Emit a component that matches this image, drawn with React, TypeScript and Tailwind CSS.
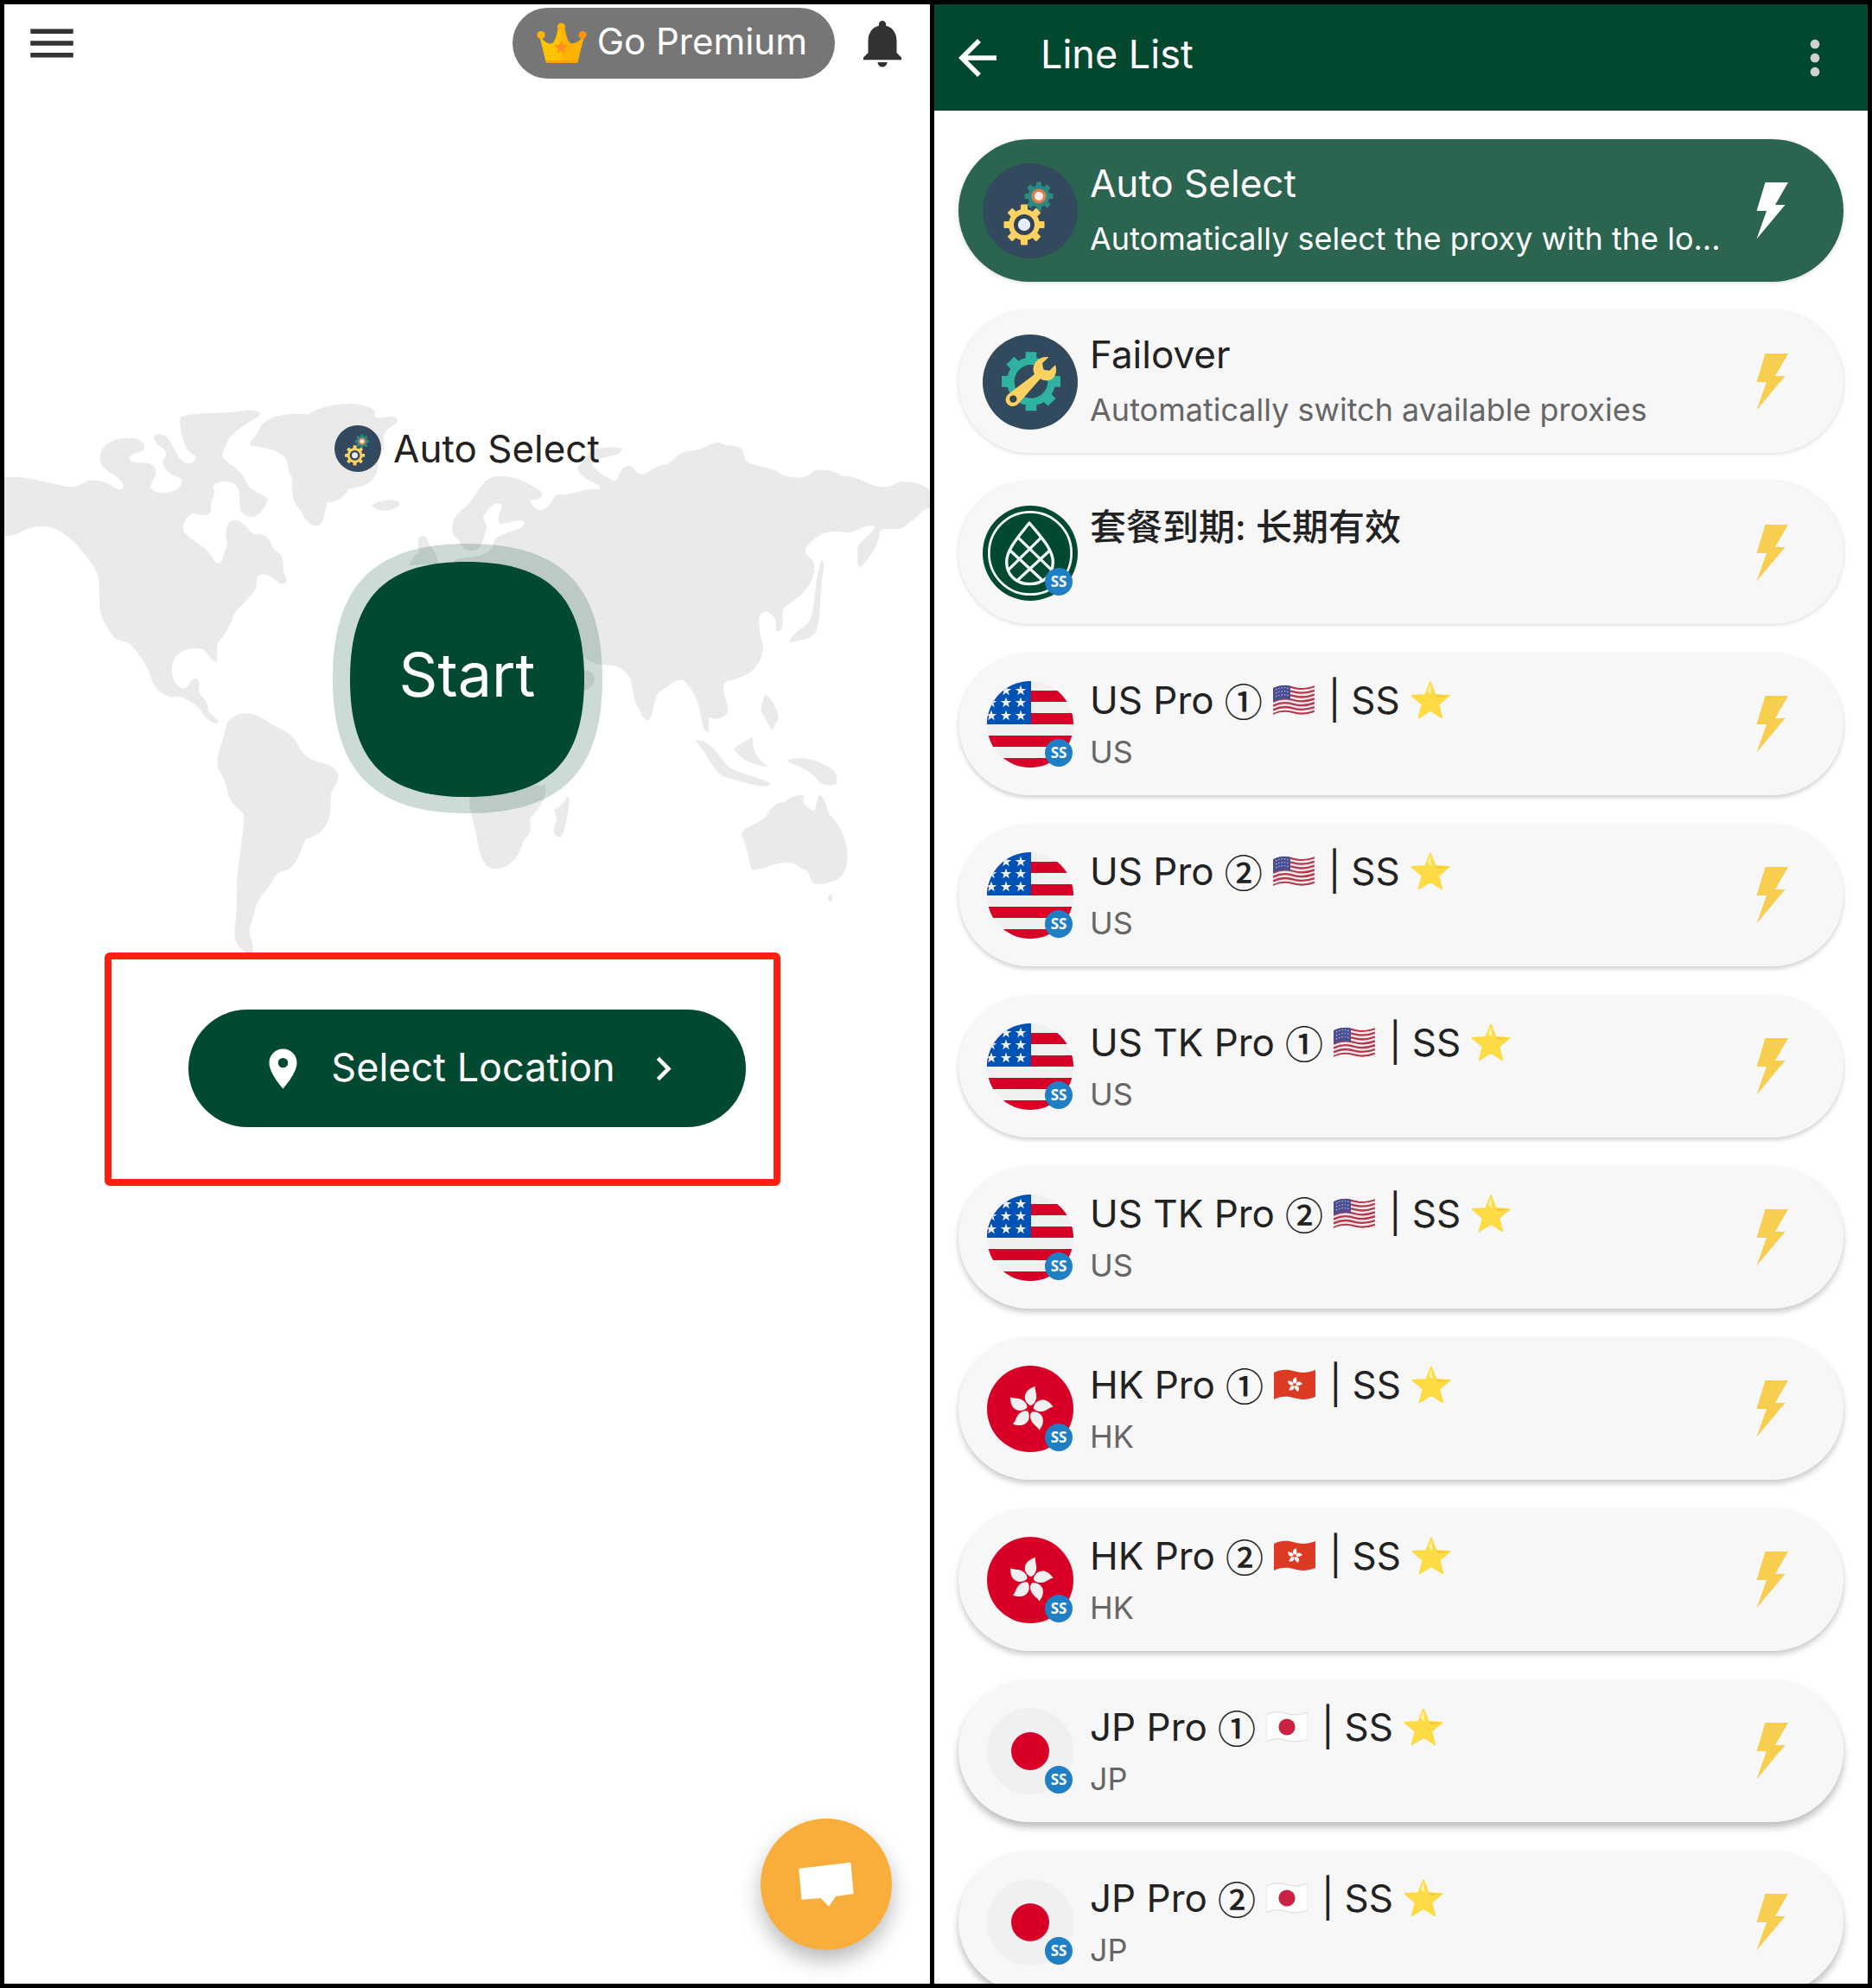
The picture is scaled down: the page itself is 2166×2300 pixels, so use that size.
import type { ReactNode } from "react";
import {
  MdArrowBack,
  MdChevronRight,
  MdMenu,
  MdMoreVert,
  MdNotifications,
  MdPlace,
} from "react-icons/md";

function starPoints(cx: number, cy: number, outer: number, inner: number) {
  return Array.from({ length: 10 }, (_, i) => {
    const r = i % 2 === 0 ? outer : inner;
    const a = (Math.PI / 5) * i - Math.PI / 2;
    return `${(cx + r * Math.cos(a)).toFixed(2)},${(cy + r * Math.sin(a)).toFixed(2)}`;
  }).join(" ");
}

function GearShape({ cx, cy, r, tooth, width, fill }: { cx: number; cy: number; r: number; tooth: number; width: number; fill: string }) {
  return (
    <g fill={fill}>
      <circle cx={cx} cy={cy} r={r} />
      {[0, 45, 90, 135, 180, 225, 270, 315].map((a) => (
        <rect key={a} x={cx - width / 2} y={cy - tooth} width={width} height={tooth} rx={1} transform={`rotate(${a} ${cx} ${cy})`} />
      ))}
    </g>
  );
}

function GearsIcon({ className }: { className: string }) {
  return (
    <svg viewBox="0 0 110 110" className={className} aria-hidden="true">
      <circle cx="55" cy="55" r="55" fill="#334a5e" />
      <GearShape cx={65} cy={38} r={12.5} tooth={16.5} width={6} fill="#2c8a80" />
      <circle cx="65" cy="38" r="8.5" fill="#d9814f" />
      <circle cx="65" cy="38" r="5" fill="#f6f1ee" />
      <GearShape cx={48} cy={71} r={18} tooth={23.5} width={8} fill="#fdd062" />
      <circle cx="48" cy="71" r="12" fill="#2f4355" />
      <circle cx="48" cy="71" r="7.2" fill="#e4ecfb" />
    </svg>
  );
}

function WrenchIcon({ className }: { className: string }) {
  return (
    <svg viewBox="0 0 330 330" className={className} aria-hidden="true">
      <circle cx="165" cy="165" r="165" fill="#324a5e" />
      <GearShape cx={168} cy={163} r={84} tooth={102} width={38} fill="#2fb3a0" />
      <circle cx="168" cy="163" r="58" fill="#324a5e" />
      <circle cx="236" cy="96" r="34" fill="#324a5e" />
      <path
        d="M176 128 C172 96 200 74 229 79 L207 100 L211 122 L232 125 L252 106 C262 132 248 161 222 160 C212 160 206 157 200 154 L126 238 C112 258 80 250 80 226 C80 216 86 210 92 205 L180 138 Z"
        fill="#fdd062"
      />
      <circle cx="106" cy="224" r="10" fill="#324a5e" stroke="#3b3a3c" strokeWidth="5" />
    </svg>
  );
}

function PineconeIcon({ className }: { className: string }) {
  return (
    <svg viewBox="0 0 330 330" className={className} fill="none" stroke="#f4fffa" aria-hidden="true">
      <circle cx="165" cy="165" r="165" fill="#014930" stroke="none" />
      <circle cx="165" cy="165" r="143" strokeWidth="8" />
      <path d="M162 60 C124 108 83 152 83 196 C83 242 118 272 163 272 C210 272 244 242 244 196 C244 152 202 108 162 60 Z" strokeWidth="10" strokeLinejoin="round" />
      <path d="M122 110 L242 226 M93 154 L210 262 M204 110 L86 226 M235 154 L118 262" strokeWidth="10" />
    </svg>
  );
}

function UsRound({ className }: { className: string }) {
  const stars = [[39, 11], [22, 11], [39, 25], [22, 25], [5, 25], [39, 40], [22, 40], [5, 40]];
  return (
    <svg viewBox="0 0 100 100" className={className} aria-hidden="true">
      <clipPath id="us-round">
        <circle cx="50" cy="50" r="50" />
      </clipPath>
      <g clipPath="url(#us-round)">
        <rect width="100" height="100" fill="#f0f0f0" />
        {[11, 37, 63, 89].map((y) => (
          <rect key={y} y={y} width="100" height="13" fill="#d80027" />
        ))}
        <rect width="51" height="50" fill="#0052b4" />
        {stars.map(([x, y]) => (
          <polygon key={`${x}-${y}`} points={starPoints(x, y, 6.6, 2.6)} fill="#f0f0f0" />
        ))}
      </g>
    </svg>
  );
}

function Petals() {
  return (
    <>
      {[0, 72, 144, 216, 288].map((a) => (
        <path key={a} d="M50 46 C41 41 41 28 56 24 C55 28 58 33 57 38 C56 43 53 46 50 46 Z" transform={`rotate(${a} 50 50)`} />
      ))}
    </>
  );
}

function HkRound({ className }: { className: string }) {
  return (
    <svg viewBox="0 0 100 100" className={className} aria-hidden="true">
      <circle cx="50" cy="50" r="50" fill="#d80027" />
      <g fill="#f0f0f0">
        <Petals />
      </g>
    </svg>
  );
}

function JpRound({ className }: { className: string }) {
  return (
    <svg viewBox="0 0 100 100" className={className} aria-hidden="true">
      <circle cx="50" cy="50" r="50" fill="#f0f0f0" />
      <circle cx="50" cy="50" r="22" fill="#d80027" />
    </svg>
  );
}

const WAVE = "M0 4 C8 0 16 0 24 2.5 C32 5 40 4 48 1 V32 C40 35 32 36 24 33.5 C16 31 8 31 0 35 Z";

function WavingFlag({ country }: { country: string }) {
  return (
    <svg viewBox="0 0 48 36" className="h-9 w-12 shrink-0" role="img" aria-label={`${country} flag`}>
      {country === "US" && (
        <>
          <clipPath id="us-wave">
            <path d={WAVE} />
          </clipPath>
          <g clipPath="url(#us-wave)">
            <path d={WAVE} fill="#eceaec" />
            {[0, 1, 2, 3, 4, 5, 6].map((i) => (
              <path key={i} d="M0 5.4 C9 1 16 1 24 3.6 C32 6 40 5 48 2" transform={`translate(0 ${i * 4.8})`} stroke="#b9364a" strokeWidth="2.3" fill="none" />
            ))}
            <path d="M0 4 C8 0 14 0 20 1.4 V17.5 C14 16 8 16 0 20 Z" fill="#4a4f94" />
            <path d="M3 6 C9 3 14 3 19 5 M3 10 C9 7 14 7 19 9 M3 14 C9 11 14 11 19 13" stroke="#b9bbdc" strokeWidth="1.2" strokeDasharray="1.4 2" fill="none" />
          </g>
        </>
      )}
      {country === "HK" && (
        <>
          <path d={WAVE} fill="#dd3a24" />
          <g fill="#fff" transform="translate(7 1) scale(0.34)">
            <Petals />
          </g>
        </>
      )}
      {country === "JP" && (
        <>
          <path d={WAVE} fill="#fdfdfd" stroke="#dcdcdc" strokeWidth="1" />
          <circle cx="24" cy="18" r="9.6" fill="#c92242" />
        </>
      )}
    </svg>
  );
}

function StarIcon() {
  return (
    <svg viewBox="0 0 46 46" className="size-[46px] shrink-0" role="img" aria-label="star">
      <polygon points={starPoints(23, 25, 22.5, 9.8)} fill="#fddb45" stroke="#fddb45" strokeWidth="2" strokeLinejoin="round" />
      <path d="M23 4 L24.5 17 L20 13 Z" fill="#fff3a8" />
      <path d="M44 18.5 L31 20 L29 17 Z" fill="#f6c437" />
    </svg>
  );
}

function CrownIcon() {
  return (
    <svg viewBox="0 0 58 48" className="h-12 w-[58px] shrink-0" aria-hidden="true">
      <path d="M3 15 L11 47 H47 L55 15 C50 22 43 26 39 24 C35 21 34 14 32 6 H25 C23 14 22 21 18 24 C14 26 8 22 3 15 Z" fill="#ffc400" />
      <path d="M28.500 6 H32 C34 14 35 21 39 24 C43 26 50 22 55 15 L47 47 H28.500 Z" fill="#ffb300" />
      <path d="M11 44 H47 V47 H11 Z" fill="#ff9d12" />
      <circle cx="28.500" cy="5" r="4.600" fill="#ffb300" />
      <circle cx="5" cy="14.500" r="4.600" fill="#ffb300" />
      <circle cx="53" cy="14.500" r="4.600" fill="#ff9212" />
      <polygon points={starPoints(28.5, 29, 8.5, 3.8)} fill="#ff8f1c" />
    </svg>
  );
}

function BoltIcon({ className }: { className: string }) {
  return (
    <svg viewBox="0 0 37 66" className={className} fill="currentColor" aria-hidden="true">
      <path d="M10.500 0 H37 L22 26 H33.500 L0.500 65.500 L12 33 H0.500 Z" />
    </svg>
  );
}

function WorldMap() {
  return (
    <svg viewBox="5 450 1071 660" className="absolute inset-x-0 top-0 w-full" fill="#eaeaea" aria-hidden="true">
      <g transform="translate(0 450) scale(0.35714 0.42092)">
        <path d="M0 245 C70 235 110 250 160 258 C210 268 235 275 262 262 C300 240 340 255 370 270 C390 280 400 278 400 262 C385 235 320 225 324 190 C325 150 370 135 420 135 C455 135 475 150 467 168 C440 178 415 180 420 192 C435 215 480 190 500 215 C515 240 490 250 487 270 C500 290 550 290 575 275 C600 255 590 245 570 240 C545 235 525 210 527 195 C545 185 540 170 520 158 C495 145 490 125 515 125 C545 125 555 150 570 175 C590 205 620 215 635 190 C630 175 610 180 600 155 C585 120 580 90 585 77 C640 62 740 70 800 58 C850 58 855 70 820 85 C780 105 740 130 735 150 C730 165 710 180 725 192 C750 210 780 225 795 250 C810 285 850 285 870 302 C860 325 840 352 815 352 C790 350 775 335 777 325 C775 305 780 280 765 265 C745 250 700 250 690 270 C705 290 680 305 683 325 C690 350 665 350 630 342 C600 345 590 375 595 390 C620 420 660 425 690 465 C700 485 718 480 720 470 C722 450 740 435 735 420 C725 380 740 358 765 360 C800 370 810 400 830 400 C880 395 870 430 895 445 C920 460 918 480 918 505 C940 530 920 542 905 533 C880 515 850 500 835 515 C825 530 840 540 820 560 C790 590 760 610 753 630 C740 670 705 690 703 705 L703 750 C685 750 680 730 655 715 C600 705 555 730 556 775 C558 810 590 830 605 820 C615 810 620 795 635 796 C655 805 640 825 645 835 C660 850 675 860 675 885 C690 900 708 908 708 915 C700 930 670 910 655 890 C640 865 600 850 580 845 C550 855 500 830 490 795 C480 760 430 705 415 697 C385 690 375 690 365 678 C335 640 322 620 322 580 C322 540 322 520 312 500 C270 440 220 400 180 385 C130 370 100 380 70 392 C50 405 20 405 0 402 Z" />
        <path d="M735 920 C760 885 820 885 860 910 C890 930 940 940 960 970 C985 1020 1020 1020 1070 1035 C1100 1050 1105 1065 1085 1090 C1060 1120 1080 1150 1065 1180 C1050 1220 1020 1230 990 1237 C975 1260 970 1300 935 1320 C900 1335 905 1320 885 1350 C860 1385 830 1400 825 1440 C805 1490 805 1490 815 1515 C822 1535 820 1550 815 1560 L790 1545 C760 1525 760 1510 760 1480 C770 1430 765 1400 768 1350 C775 1280 790 1220 790 1170 C775 1150 745 1140 737 1110 C730 1070 715 1060 705 1040 C700 1000 720 980 735 920 Z" />
        <path d="M845 100 C880 70 940 65 1000 70 C1040 45 1100 42 1140 40 C1180 45 1210 50 1217 65 C1205 85 1230 80 1270 75 C1300 82 1290 95 1265 105 C1240 120 1240 135 1245 165 C1220 180 1230 220 1215 240 C1190 270 1160 270 1130 275 C1110 300 1090 312 1062 312 C1050 330 1055 370 1030 375 C990 380 985 340 960 320 C940 290 950 270 947 245 C930 225 935 210 925 190 C900 165 850 160 810 155 C805 145 840 125 845 100 Z" />
        <path d="M1202 320 C1230 305 1290 298 1295 315 C1290 335 1240 337 1225 332 Z" />
        <path d="M1355 410 C1370 398 1385 405 1388 425 C1410 445 1420 465 1420 480 L1325 485 C1335 465 1350 450 1355 455 Z" />
      </g>
      <g transform="translate(540 450) scale(0.35714 0.42092)">
        <path d="M-47 380 C-45 340 0 330 20 300 C50 265 60 240 110 240 C160 240 190 255 240 280 C250 295 240 305 205 305 C215 335 250 340 265 320 C280 310 285 290 295 290 C340 295 360 275 430 275 C440 262 410 260 385 245 C350 225 355 215 370 205 C400 190 385 180 400 170 C430 160 490 155 505 165 C500 190 430 180 405 205 C420 230 450 240 480 253 C500 240 490 215 525 210 C550 215 545 235 570 235 C600 225 610 210 650 207 C680 190 690 170 730 170 C780 165 790 145 820 147 C840 160 870 150 890 165 C905 185 895 200 920 205 C970 220 990 215 1020 235 C1060 248 1100 248 1125 225 C1160 218 1190 225 1220 240 C1270 240 1290 260 1330 268 C1360 270 1375 270 1395 257 C1430 250 1480 260 1502 280 L1502 328 C1470 330 1465 350 1455 355 C1430 365 1420 385 1395 385 C1370 385 1345 382 1337 395 C1335 430 1310 460 1275 492 C1262 490 1268 460 1266 435 C1280 415 1310 400 1325 378 C1290 370 1270 390 1240 395 C1190 390 1160 388 1130 410 C1110 425 1090 440 1100 455 C1120 470 1130 475 1125 500 C1120 550 1070 575 1030 600 C1015 620 1030 640 1020 660 C1005 675 1000 665 1002 645 C1000 620 975 612 965 612 C945 620 943 635 950 655 C945 680 965 695 960 720 C945 780 900 790 840 805 C820 820 840 850 848 880 C845 900 810 915 787 903 C780 910 785 930 785 943 C765 945 765 920 758 900 C755 860 730 820 700 800 C680 795 650 820 620 835 C605 855 605 900 590 910 C575 915 565 890 555 875 C540 855 540 830 530 795 C500 755 470 760 434 757 C410 757 395 745 380 738 L-40 740 V470 C20 455 60 470 85 430 C90 405 110 405 130 395 C160 390 190 380 187 365 C165 355 140 370 105 370 C95 350 115 330 115 320 C100 305 75 320 55 350 C50 365 75 370 60 395 C50 420 50 440 20 445 C-10 445 -20 430 -25 415 C-40 405 -47 400 -47 380 Z" />
        <path d="M370 772 C400 772 415 785 415 797 C412 815 395 828 370 832 Z" />
        <path d="M10 1120 C5 1150 20 1180 30 1220 C40 1270 50 1310 80 1318 C130 1325 170 1290 185 1240 C215 1215 205 1200 205 1185 C220 1160 260 1140 255 1090 L10 1090 Z" />
        <path d="M325 1120 C340 1120 330 1150 325 1180 C315 1210 315 1232 300 1232 C280 1225 275 1215 290 1190 C295 1170 280 1165 285 1155 C310 1145 315 1135 325 1120 Z" />
        <path d="M1150 470 C1160 480 1158 490 1150 530 C1145 580 1145 650 1130 670 C1110 690 1080 690 1050 697 C1040 690 1060 675 1080 660 C1110 650 1125 620 1128 560 C1135 530 1135 500 1150 470 Z" />
        <path d="M968 840 C990 850 1012 890 1010 905 L992 937 C975 925 965 900 953 885 C955 865 960 855 968 840 Z" />
        <path d="M740 967 C780 960 800 990 850 1040 C890 1060 960 1070 985 1085 C970 1100 930 1090 830 1065 C790 1040 780 1000 740 967 Z" />
        <path d="M925 957 C930 970 925 985 935 1000 C945 1020 970 1030 975 1038 C930 1035 890 1020 865 990 C885 975 910 965 925 957 Z" />
        <path d="M1040 1020 C1080 1010 1120 1015 1150 1030 C1190 1045 1200 1050 1200 1085 C1180 1092 1150 1090 1140 1080 C1120 1050 1080 1040 1040 1025 Z" />
        <path d="M890 1225 C900 1200 940 1200 970 1175 C985 1150 1005 1135 1030 1135 C1050 1120 1080 1112 1095 1120 C1080 1135 1100 1150 1125 1160 C1135 1150 1130 1125 1145 1115 C1160 1125 1165 1150 1175 1170 C1215 1200 1240 1260 1233 1300 C1225 1345 1190 1362 1125 1360 C1110 1345 1110 1325 1095 1320 C1075 1320 1070 1300 1040 1303 C1000 1300 970 1320 925 1322 C915 1310 915 1270 890 1225 Z" />
        <ellipse cx="1178" cy="1400" rx="7" ry="10" />
      </g>
    </svg>
  );
}

function HomeScreen() {
  return (
    <section className="relative flex min-w-0 flex-col overflow-hidden bg-white">
      <header className="flex h-[90px] shrink-0 items-center px-[22px]">
        <button type="button" aria-label="Menu" className="text-[#333]">
          <MdMenu className="size-[66px]" />
        </button>
        <button type="button" className="ml-auto flex h-[82px] items-center gap-3 rounded-full bg-[#767676] pr-8 pl-7 text-[42px] leading-none whitespace-nowrap text-white">
          <CrownIcon />
          <span className="pb-1">Go Premium</span>
        </button>
        <button type="button" aria-label="Notifications" className="ml-[22px] text-[#333]">
          <MdNotifications className="size-[66px]" />
        </button>
      </header>

      <div className="relative mt-[355px] flex flex-col items-center pt-[42px]">
        <WorldMap />
        <div className="relative flex h-[54px] items-center gap-[14px] text-[44px] leading-none text-[#222]">
          <GearsIcon className="size-[54px]" />
          <span>Auto Select</span>
        </div>
        <button type="button" className="relative mt-[83px] grid size-[312px] place-items-center text-[70px] leading-none text-white">
          <svg viewBox="0 0 312 312" className="absolute inset-0 size-full" aria-hidden="true">
            <path d="M0 156 C0 48 48 0 156 0 C264 0 312 48 312 156 C312 264 264 312 156 312 C48 312 0 264 0 156 Z" fill="#014930" fillOpacity="0.2" />
            <path d="M20 157 C20 62 61 21 155 21 C250 21 291 62 291 157 C291 252 250 293 155 293 C61 293 20 252 20 157 Z" fill="#014930" />
          </svg>
          <span className="relative pb-2">Start</span>
        </button>
        <div className="relative mt-[227px]">
          <div className="pointer-events-none absolute -top-[66px] -right-10 -bottom-[68px] -left-[97px] rounded-md border-8 border-[#ff2011]" />
          <button type="button" className="flex h-[136px] items-center rounded-full bg-[#014930] pr-[68px] pl-[82px] text-[45px] leading-none whitespace-nowrap text-white">
            <MdPlace className="size-[55px]" />
            <span className="mr-[28px] ml-[28px] pb-1">Select Location</span>
            <MdChevronRight className="size-[55px]" />
          </button>
        </div>
      </div>

      <button
        type="button"
        aria-label="Chat"
        className="absolute right-11 bottom-[39px] size-[152px] rounded-full bg-[#f9ae3b] shadow-[0_12px_24px_rgba(0,0,0,0.28)]"
      >
        <svg viewBox="0 0 456 456" className="size-full" fill="#fff" aria-hidden="true">
          <path d="M133 173 L313 152 L323 261 L261 270 L237 305 L209 276 L142 281 Z" />
        </svg>
      </button>
    </section>
  );
}

type Line = {
  title: string;
  subtitle?: string;
  icon: ReactNode;
  country?: string;
  number?: string;
  badge?: boolean;
  shadow: string;
};

const round = "size-[100px]";
const SOFT = "shadow-[0_1px_5px_rgba(0,0,0,0.16)]";
const LOW = "shadow-[0_3px_5px_rgba(0,0,0,0.18)]";
const MID = "shadow-[0_4px_7px_rgba(0,0,0,0.22)]";
const HIGH = "shadow-[0_6px_9px_rgba(0,0,0,0.26)]";

const lines: Line[] = [
  { title: "Auto Select", subtitle: "Automatically select the proxy with the lo...", icon: <GearsIcon className="size-[110px]" />, shadow: SOFT },
  { title: "Failover", subtitle: "Automatically switch available proxies", icon: <WrenchIcon className="size-[110px]" />, shadow: SOFT },
  { title: "套餐到期: 长期有效", icon: <PineconeIcon className="size-[110px]" />, badge: true, shadow: SOFT },
  { title: "US Pro", number: "①", country: "US", icon: <UsRound className={round} />, badge: true, shadow: LOW },
  { title: "US Pro", number: "②", country: "US", icon: <UsRound className={round} />, badge: true, shadow: LOW },
  { title: "US TK Pro", number: "①", country: "US", icon: <UsRound className={round} />, badge: true, shadow: LOW },
  { title: "US TK Pro", number: "②", country: "US", icon: <UsRound className={round} />, badge: true, shadow: MID },
  { title: "HK Pro", number: "①", country: "HK", icon: <HkRound className={round} />, badge: true, shadow: MID },
  { title: "HK Pro", number: "②", country: "HK", icon: <HkRound className={round} />, badge: true, shadow: MID },
  { title: "JP Pro", number: "①", country: "JP", icon: <JpRound className={round} />, badge: true, shadow: HIGH },
  { title: "JP Pro", number: "②", country: "JP", icon: <JpRound className={round} />, badge: true, shadow: HIGH },
];

function LineCard({ line, selected }: { line: Line; selected: boolean }) {
  return (
    <button
      type="button"
      aria-pressed={selected}
      className={`flex h-[165px] w-full items-center rounded-full pr-16 pl-7 text-left ${line.shadow} ${selected ? "bg-[#2b644f] text-white" : "bg-[#f7f7f7] text-[#222]"}`}
    >
      <span className="relative grid size-[110px] shrink-0 place-items-center">
        {line.icon}
        {line.badge && (
          <span className="absolute top-[72px] left-[72px] grid size-8 place-items-center rounded-full bg-[#1f7fc4] font-['Open_Sans',sans-serif] text-[17px] leading-none font-bold text-white">
            SS
          </span>
        )}
      </span>
      <span className="ml-[14px] flex h-full min-w-0 flex-1 flex-col whitespace-nowrap">
        {line.country ? (
          <>
            <span className="mt-[29px] flex h-[52px] items-center gap-3 text-[44px] leading-[52px]">
              <span>{line.title}</span>
              <span className="font-['Noto_Sans_CJK_SC',sans-serif] leading-[52px] font-medium">{line.number}</span>
              <WavingFlag country={line.country} />
              <span className="ml-1">|</span>
              <span>SS</span>
              <StarIcon />
            </span>
            <span className="mt-3 text-[36px] leading-[44px] text-[#666]">{line.country}</span>
          </>
        ) : (
          <>
            <span className={line.subtitle ? "mt-[25px] text-[44px] leading-[52px]" : "mt-[27px] text-[42px] leading-[52px] font-medium"}>{line.title}</span>
            {line.subtitle && (
              <span className={`mt-4 text-[36px] leading-[44px] ${selected ? "text-white" : "text-[#666]"}`}>{line.subtitle}</span>
            )}
          </>
        )}
      </span>
      <BoltIcon className={`h-[66px] w-[37px] shrink-0 ${selected ? "text-white" : "text-[#f7ce4f]"}`} />
    </button>
  );
}

function LineListScreen() {
  return (
    <section className="flex min-w-0 flex-col overflow-hidden bg-white">
      <header className="flex h-[123px] shrink-0 items-center bg-[#02482f] pr-[29px] pl-[17px] text-white">
        <button type="button" aria-label="Back">
          <MdArrowBack className="size-[66px]" />
        </button>
        <h1 className="ml-10 pb-2 text-[45px] leading-[52px]">Line List</h1>
        <button type="button" aria-label="More options" className="ml-auto text-[#d0d0d0]">
          <MdMoreVert className="size-16" />
        </button>
      </header>
      <ul className="flex min-h-0 flex-1 flex-col gap-[33px] overflow-hidden px-7 pt-[33px]">
        {lines.map((line, i) => (
          <li key={i} className="shrink-0">
            <LineCard line={line} selected={i === 0} />
          </li>
        ))}
      </ul>
    </section>
  );
}

export default function App() {
  return (
    <main className="grid h-screen grid-cols-[1071fr_1080fr] grid-rows-[minmax(0,1fr)] gap-[5px] bg-black p-[5px] font-[Inter,'Noto_Sans_CJK_SC',sans-serif]">
      <HomeScreen />
      <LineListScreen />
    </main>
  );
}
